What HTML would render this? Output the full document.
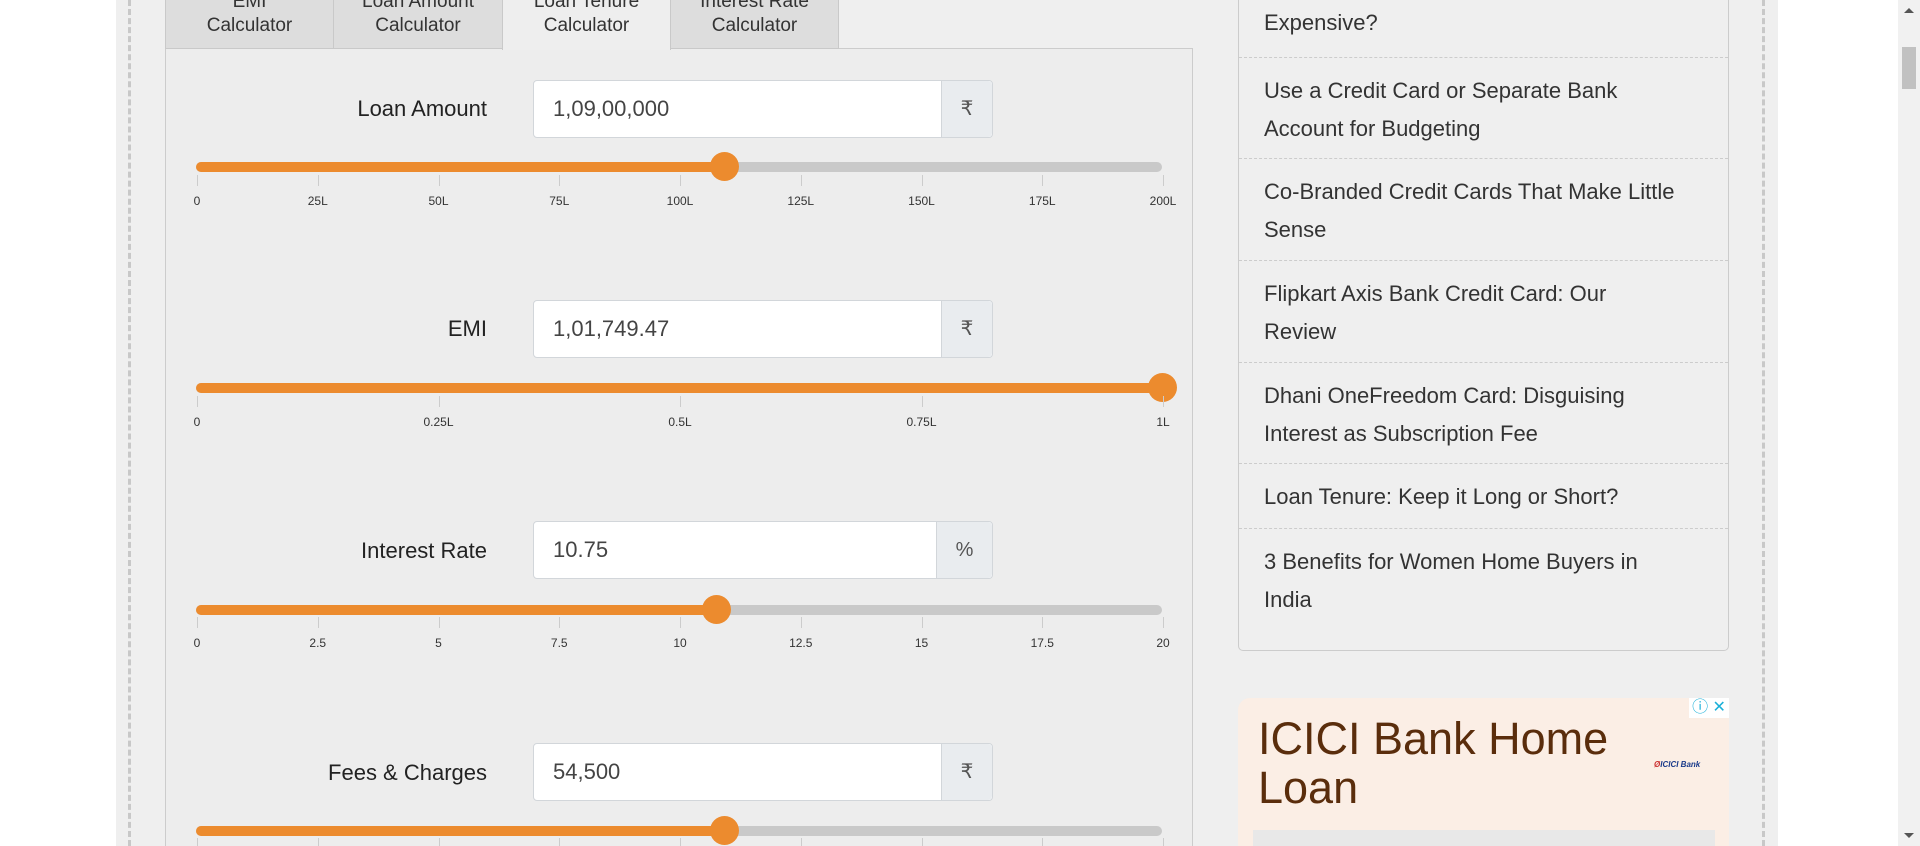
<!DOCTYPE html>
<html><head><meta charset="utf-8"><style>
*{box-sizing:border-box;margin:0;padding:0}
html,body{width:1920px;height:846px;overflow:hidden}
body{background:#fff;font-family:"Liberation Sans",sans-serif;position:relative;color:#222}
.wrap{position:absolute;left:116px;top:0;width:1662px;height:846px;background:#efefef}
.dash{position:absolute;top:0;height:846px;border-left:3px dashed #c8c8c8}
.tab{position:absolute;top:-20px;height:69px;background:#ddd;border:1px solid #c9c9c9;text-align:center;font-size:19px;line-height:24px;color:#333;padding-top:9px}
.tab.act{background:#eee;border-bottom:none;height:70px}
.panel{position:absolute;left:165px;top:48px;width:1028px;height:798px;border:1px solid #ccc;border-bottom:none;background:#ededed}
.lbl{position:absolute;width:300px;text-align:right;font-size:22px;color:#222}
.inp{position:absolute;left:533px;width:460px;height:58px;background:#fff;border:1px solid #d2d6da;border-radius:4px;font-size:22px;color:#444;padding-left:19px;line-height:56px}
.add{position:absolute;right:0;top:0;height:56px;background:#e9ecef;border-left:1px solid #d2d6da;text-align:center;font-size:20px;color:#555;border-radius:0 4px 4px 0}
.track{position:absolute;left:196px;width:966px;height:10px;border-radius:5px;background:#c9c9c9}
.fill{position:absolute;left:0;top:0;height:10px;border-radius:5px;background:#ec8b2e}
.thumb{position:absolute;top:-10px;width:29px;height:29px;border-radius:50%;background:#ec8b2e;margin-left:-14px}
.tick{position:absolute;width:1px;height:11px;background:#ccc}
.tl{position:absolute;font-size:12px;color:#333;width:60px;margin-left:-30px;text-align:center}
.side{position:absolute;left:1238px;top:-5px;width:491px;height:656px;border:1px solid #ccc;border-top:none;border-radius:0 0 5px 5px;background:#efefef}
.it{border-bottom:1px dashed #ccc;padding:0 25px;font-size:22px;line-height:38px;color:#333}
.ad{position:absolute;left:1238px;top:698px;width:491px;height:148px;background:#fbeee5;border-radius:12px 0 0 0;overflow:hidden}
.sb{position:absolute;right:0;top:0;width:22px;height:846px;background:#f1f1f1}
</style></head><body>
<div class="wrap"></div>
<div class="dash" style="left:128px"></div>
<div class="dash" style="left:1762px"></div>
<div class="panel"></div>
<div class="tab" style="left:165px;width:169px">EMI<br>Calculator</div>
<div class="tab" style="left:333px;width:170px">Loan Amount<br>Calculator</div>
<div class="tab act" style="left:502px;width:169px">Loan Tenure<br>Calculator</div>
<div class="tab" style="left:670px;width:169px">Interest Rate<br>Calculator</div>

<div class="lbl" style="top:96px;left:187px">Loan Amount</div>
<div class="inp" style="top:80px">1,09,00,000<div class="add" style="width:51px">₹</div></div>
<div class="track" style="top:162px"><div class="fill" style="width:528px"></div><div class="thumb" style="left:528px"></div></div>

<div class="lbl" style="top:316px;left:187px">EMI</div>
<div class="inp" style="top:300px">1,01,749.47<div class="add" style="width:51px">₹</div></div>
<div class="track" style="top:383px"><div class="fill" style="width:966px"></div><div class="thumb" style="left:966px"></div></div>

<div class="lbl" style="top:538px;left:187px">Interest Rate</div>
<div class="inp" style="top:521px">10.75<div class="add" style="width:56px">%</div></div>
<div class="track" style="top:605px"><div class="fill" style="width:520px"></div><div class="thumb" style="left:520px"></div></div>

<div class="lbl" style="top:760px;left:187px">Fees &amp; Charges</div>
<div class="inp" style="top:743px">54,500<div class="add" style="width:51px">₹</div></div>
<div class="track" style="top:826px"><div class="fill" style="width:528px"></div><div class="thumb" style="left:528px"></div></div>

<div id="ticks"></div>
<script>
var sets=[[175,["0","25L","50L","75L","100L","125L","150L","175L","200L"]],
[396,["0","","0.25L","","0.5L","","0.75L","","1L"]],
[617,["0","2.5","5","7.5","10","12.5","15","17.5","20"]],
[838,["x","x","x","x","x","x","x","x","x"]]];
var h="";
sets.forEach(function(s){var y=s[0];s[1].forEach(function(t,i){var x=197+i*120.75;
if(t)h+='<div class="tick" style="left:'+x+'px;top:'+y+'px"></div>';
if(t&&t!="x")h+='<div class="tl" style="left:'+x+'px;top:'+(y+19)+'px">'+t+'</div>';});});
document.getElementById("ticks").innerHTML=h;
</script>

<div class="side">
<div class="it" style="height:63px;padding-top:9px">Expensive?</div>
<div class="it" style="height:101px;padding-top:14px">Use a Credit Card or Separate Bank<br>Account for Budgeting</div>
<div class="it" style="height:102px;padding-top:14px">Co-Branded Credit Cards That Make Little<br>Sense</div>
<div class="it" style="height:102px;padding-top:14px">Flipkart Axis Bank Credit Card: Our<br>Review</div>
<div class="it" style="height:101px;padding-top:14px">Dhani OneFreedom Card: Disguising<br>Interest as Subscription Fee</div>
<div class="it" style="height:65px;padding-top:14px">Loan Tenure: Keep it Long or Short?</div>
<div class="it" style="border:none;padding-top:14px">3 Benefits for Women Home Buyers in<br>India</div>
</div>
<div class="ad">
<div style="position:absolute;left:20px;top:16px;font-size:45px;line-height:49px;color:#5a2d0c">ICICI Bank Home<br>Loan</div>
<div style="position:absolute;left:416px;top:62px;font-size:8px;color:#1a3a8a;font-weight:bold;font-style:italic"><span style="color:#c33">Ø</span>ICICI Bank</div>
<div style="position:absolute;right:0;top:0;width:40px;height:20px;background:#fff;color:#1ab0d8;font-size:16px;line-height:20px;text-align:center">ⓘ ✕</div>
<div style="position:absolute;left:15px;top:132px;width:462px;height:20px;background:#e8e8e8"></div>
</div>
<div class="sb"><div style="position:absolute;left:4px;top:47px;width:14px;height:42px;background:#c1c1c1"></div>
<div style="position:absolute;left:6px;top:8px;border:5px solid transparent;border-bottom-color:#555;border-top:none"></div>
<div style="position:absolute;left:6px;bottom:8px;border:5px solid transparent;border-top-color:#555;border-bottom:none"></div></div>
</body></html>
